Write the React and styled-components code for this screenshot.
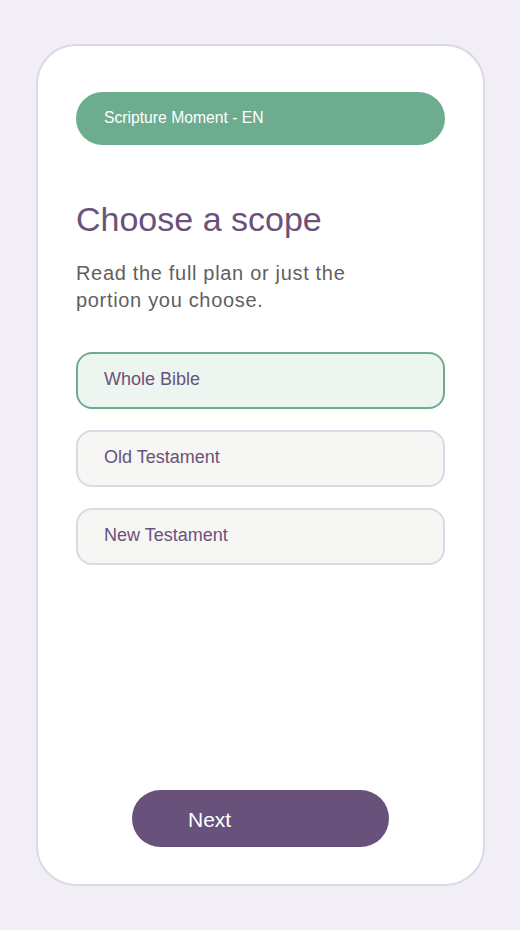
import styled, { createGlobalStyle } from 'styled-components'

const GlobalStyle = createGlobalStyle`
  body {
    margin: 0;
    background: #f1eef6;
    font-family: "Liberation Sans", Arial, sans-serif;
  }
`

const Card = styled.div`
  box-sizing: border-box;
  width: 449px;
  height: 842px;
  margin: 44px 0 0 36px;
  background: #ffffff;
  border: 2px solid #ddd7e7;
  border-radius: 40px;
  padding: 46px 38px 37px;
  display: flex;
  flex-direction: column;
`

const Banner = styled.div`
  box-sizing: border-box;
  height: 53px;
  border-radius: 27px;
  background: #6dad8f;
  color: #ffffff;
  font-size: 15.7px;
  display: flex;
  align-items: center;
  padding: 0 28px 1px;
`

const Title = styled.h1`
  margin: 54px 0 0;
  font-size: 34px;
  font-weight: 400;
  line-height: 40px;
  color: #6a527c;
`

const Subtitle = styled.p`
  margin: 21px 0 0;
  max-width: 300px;
  font-size: 20px;
  line-height: 27px;
  letter-spacing: 0.68px;
  color: #5f5f5f;
`

const Options = styled.div`
  display: flex;
  flex-direction: column;
  gap: 21px;
  margin-top: 38px;
`

const Option = styled.button`
  box-sizing: border-box;
  height: 57px;
  width: 100%;
  border-radius: 16px;
  border: 2px solid ${p => (p.$selected ? '#6dad8f' : '#ddd7e7')};
  background: ${p => (p.$selected ? '#edf5f0' : '#f6f6f4')};
  color: #6a527c;
  font-family: inherit;
  font-size: 18px;
  text-align: left;
  padding: 0 26px 2px;
  cursor: pointer;
`

const NextButton = styled.button`
  box-sizing: border-box;
  margin-top: auto;
  align-self: center;
  width: 257px;
  height: 57px;
  border: none;
  border-radius: 29px;
  background: #68527b;
  color: #ffffff;
  font-family: inherit;
  font-size: 21px;
  text-align: left;
  padding: 2px 56px 0;
  cursor: pointer;
`

const scopes = ['Whole Bible', 'Old Testament', 'New Testament']

export default function App() {
  return (
    <>
      <GlobalStyle />
      <Card>
        <Banner>Scripture Moment - EN</Banner>
        <Title>Choose a scope</Title>
        <Subtitle>Read the full plan or just the portion you choose.</Subtitle>
        <Options>
          {scopes.map((s, i) => (
            <Option key={s} $selected={i === 0}>{s}</Option>
          ))}
        </Options>
        <NextButton>Next</NextButton>
      </Card>
    </>
  )
}
